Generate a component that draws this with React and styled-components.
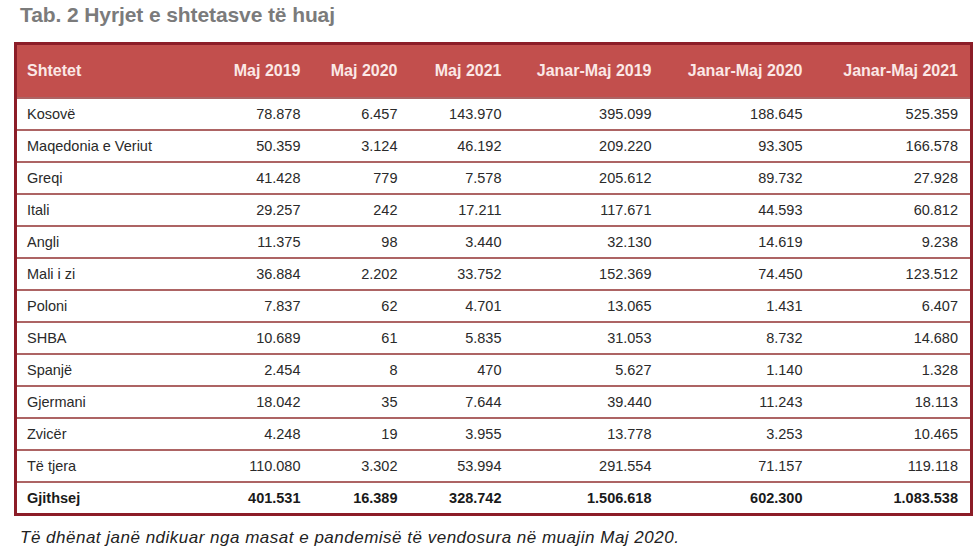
import styled, { createGlobalStyle } from "styled-components"

const Global = createGlobalStyle`
body {
  margin: 0;
  background: #fff;
  font-family: "Liberation Sans", Arial, sans-serif;
}
`

const Page = styled.div`
width: 980px;
height: 552px;
padding: 4px 0 0 20px;
box-sizing: border-box;
`

const Title = styled.h1`
margin: 0;
font-size: 21px;
font-weight: bold;
color: #7b7b7b;
letter-spacing: -0.1px;
line-height: 22px;
`

const Table = styled.table`
margin: 16px 0 0 -6px;
width: 956px;
border-collapse: collapse;
table-layout: fixed;
border: 3px solid #8c1d28;
`

const HeadCell = styled.th`
background: #c24f4d;
color: #fbe8e6;
font-size: 16px;
font-weight: bold;
height: 52px;
padding: 0 12px 0 ${p => (p.$left ? "10px" : "0")};
text-align: ${p => (p.$left ? "left" : "right")};
border-bottom: 1px solid #a23a3a;
`

const Cell = styled.td`
height: 30px;
padding: 0 12px 0 ${p => (p.$left ? "10px" : "0")};
text-align: ${p => (p.$left ? "left" : "right")};
font-size: 14.5px;
color: ${p => (p.$total ? "#1a1a1a" : "#2a2a2a")};
font-weight: ${p => (p.$total ? "bold" : "normal")};
border-top: 2px solid #ad6464;
white-space: nowrap;
`

const Note = styled.p`
margin: 12px 0 0 0;
font-size: 17px;
letter-spacing: 0.5px;
font-style: italic;
color: #222;
`

const widths = [194, 103, 97, 104, 150, 151, 157]

const heads = ["Shtetet", "Maj 2019", "Maj 2020", "Maj 2021", "Janar-Maj 2019", "Janar-Maj 2020", "Janar-Maj 2021"]

const rows = [
    ["Kosovë", "78.878", "6.457", "143.970", "395.099", "188.645", "525.359"],
    ["Maqedonia e Veriut", "50.359", "3.124", "46.192", "209.220", "93.305", "166.578"],
    ["Greqi", "41.428", "779", "7.578", "205.612", "89.732", "27.928"],
    ["Itali", "29.257", "242", "17.211", "117.671", "44.593", "60.812"],
    ["Angli", "11.375", "98", "3.440", "32.130", "14.619", "9.238"],
    ["Mali i zi", "36.884", "2.202", "33.752", "152.369", "74.450", "123.512"],
    ["Poloni", "7.837", "62", "4.701", "13.065", "1.431", "6.407"],
    ["SHBA", "10.689", "61", "5.835", "31.053", "8.732", "14.680"],
    ["Spanjë", "2.454", "8", "470", "5.627", "1.140", "1.328"],
    ["Gjermani", "18.042", "35", "7.644", "39.440", "11.243", "18.113"],
    ["Zvicër", "4.248", "19", "3.955", "13.778", "3.253", "10.465"],
    ["Të tjera", "110.080", "3.302", "53.994", "291.554", "71.157", "119.118"],
]

const total = ["Gjithsej", "401.531", "16.389", "328.742", "1.506.618", "602.300", "1.083.538"]

const App = () => {
    return (
        <Page>
            <Global />
            <Title>Tab. 2 Hyrjet e shtetasve të huaj</Title>
            <Table>
                <colgroup>
                    {widths.map((w, i) => <col key={i} style={{ width: w }} />)}
                </colgroup>
                <thead>
                    <tr>
                        {heads.map((h, i) => <HeadCell key={h} $left={i === 0}>{h}</HeadCell>)}
                    </tr>
                </thead>
                <tbody>
                    {rows.map(r => (
                        <tr key={r[0]}>
                            {r.map((v, i) => <Cell key={i} $left={i === 0}>{v}</Cell>)}
                        </tr>
                    ))}
                    <tr>
                        {total.map((v, i) => <Cell key={i} $left={i === 0} $total>{v}</Cell>)}
                    </tr>
                </tbody>
            </Table>
            <Note>Të dhënat janë ndikuar nga masat e pandemisë të vendosura në muajin Maj 2020.</Note>
        </Page>
    )
}
export default App
